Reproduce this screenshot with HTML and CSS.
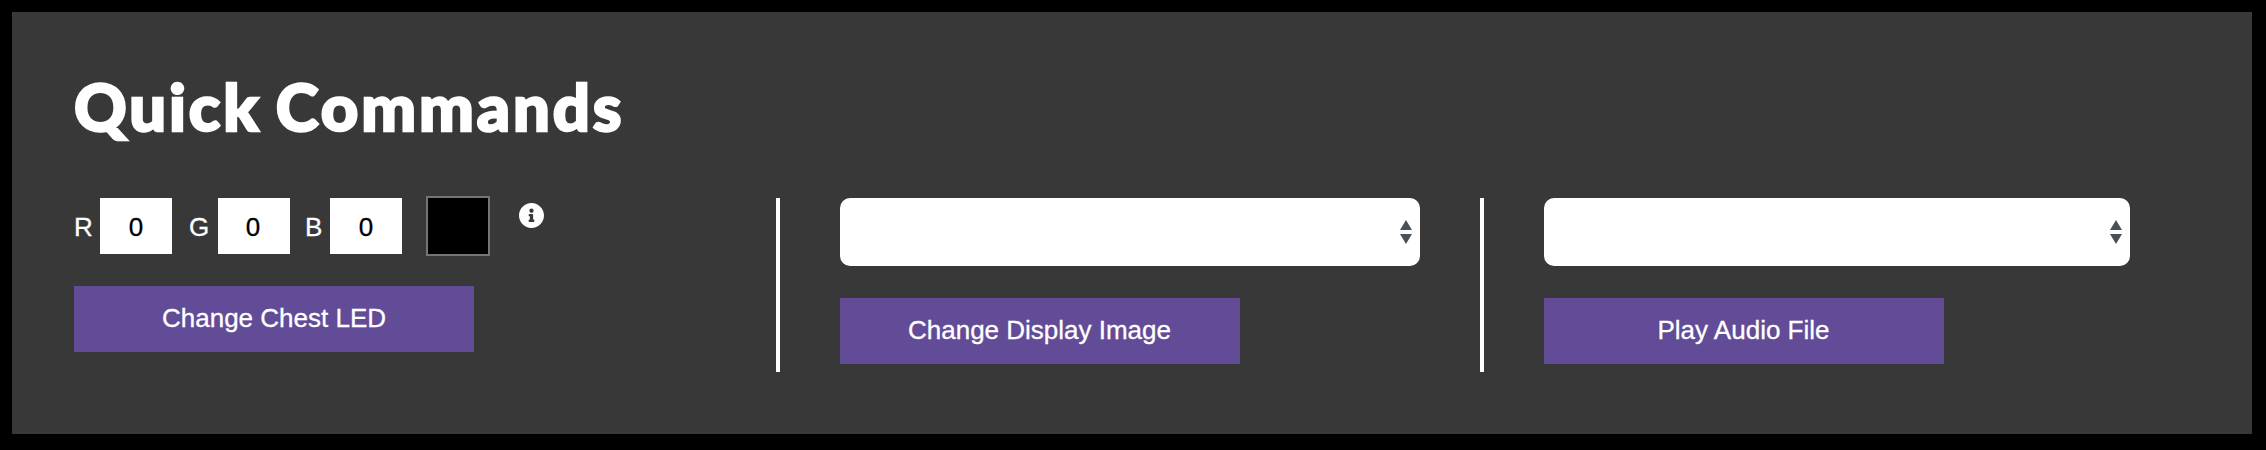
FILE: index.html
```html
<!DOCTYPE html>
<html lang="en">
<head>
<meta charset="utf-8">
<title>Quick Commands</title>
<link rel="stylesheet" href="styles.css">
</head>
<body>
<main class="panel">
  <h1 class="title">Quick Commands</h1>
  <div class="columns">
    <section class="column column-led">
      <div class="led-row">
        <label class="channel channel-r"><span class="channel-name">R</span><input class="channel-value" type="text" value="0"></label>
        <label class="channel channel-g"><span class="channel-name">G</span><input class="channel-value" type="text" value="0"></label>
        <label class="channel channel-b"><span class="channel-name">B</span><input class="channel-value" type="text" value="0"></label>
        <div class="swatch"></div>
        <svg class="info" viewBox="8 8 496 496"><path fill="#fff" d="M256 8C119 8 8 119 8 256s111 248 248 248 248-111 248-248S393 8 256 8zm0 110c23.200 0 42 18.800 42 42s-18.800 42-42 42-42-18.800-42-42 18.800-42 42-42zm56 254c0 6.600-5.400 12-12 12h-88c-6.600 0-12-5.400-12-12v-24c0-6.600 5.400-12 12-12h12v-64h-12c-6.600 0-12-5.400-12-12v-24c0-6.600 5.400-12 12-12h64c6.600 0 12 5.400 12 12v100h12c6.600 0 12 5.400 12 12v24z"/></svg>
      </div>
      <button class="command command-led">Change Chest LED</button>
    </section>
    <section class="column column-image">
      <div class="select"><svg class="arrows" viewBox="0 0 12 24"><path d="M6 0l6 10H0zM0 14h12L6 24z"/></svg></div>
      <button class="command">Change Display Image</button>
    </section>
    <section class="column column-audio">
      <div class="select"><svg class="arrows" viewBox="0 0 12 24"><path d="M6 0l6 10H0zM0 14h12L6 24z"/></svg></div>
      <button class="command">Play Audio File</button>
    </section>
  </div>
</main>
</body>
</html>
```

FILE: styles.css
```css
* { box-sizing: border-box; }
body {
  margin: 0;
  padding: 12px 14px 16px 12px;
  height: 450px;
  background: #000;
  color: #fff;
  font-family: "Liberation Sans", Arial, sans-serif;
  font-size: 26px;
  -webkit-text-stroke-width: 0.3px;
}
.panel {
  height: 422px;
  padding: 54px 62px 0;
  background: #383838;
}
.title {
  margin: 0;
  height: 132px;
  font: 900 65px/80px Lato, sans-serif;
  letter-spacing: 2.9px;
  word-spacing: -4px;
  -webkit-text-stroke: 2.4px #fff;
  white-space: nowrap;
}
.columns { display: flex; height: 174px; }
.column-led { width: 702px; }
.column-image {
  width: 704px;
  padding: 0 60px;
  border-left: 4px solid #fff;
}
.column-audio {
  width: 650px;
  padding-left: 60px;
  border-left: 4px solid #fff;
}
.led-row { display: flex; height: 56px; }
.channel { display: flex; line-height: 58px; }
.channel-r .channel-name { width: 26px; }
.channel-g .channel-name { width: 29px; }
.channel-b .channel-name { width: 25px; }
.channel-g { margin-left: 17px; }
.channel-b { margin-left: 15px; }
.channel-value {
  width: 72px;
  height: 56px;
  padding: 2px 0 0;
  border: 0;
  border-radius: 0;
  background: #fff;
  color: #000;
  font: inherit;
  text-align: center;
}
.channel-g .channel-value { padding-right: 2px; }
.swatch {
  width: 64px;
  height: 60px;
  margin: -2px 0 0 24px;
  border: 2px solid #757575;
  background: #000;
}
.info { width: 25px; height: 25px; margin: 5px 0 0 29px; }
.command {
  display: block;
  width: 400px;
  height: 66px;
  margin-top: 32px;
  padding: 0 1px 1px 0;
  border: 0;
  background: #624c98;
  color: #fff;
  font: inherit;
}
.command-led { padding-right: 0; }
.select {
  display: flex;
  align-items: center;
  justify-content: flex-end;
  height: 68px;
  padding-right: 8px;
  border-radius: 10px;
  background: #fff;
}
.column-audio .select { width: 586px; }
.arrows { width: 12px; height: 24px; fill: #495057; }
```
